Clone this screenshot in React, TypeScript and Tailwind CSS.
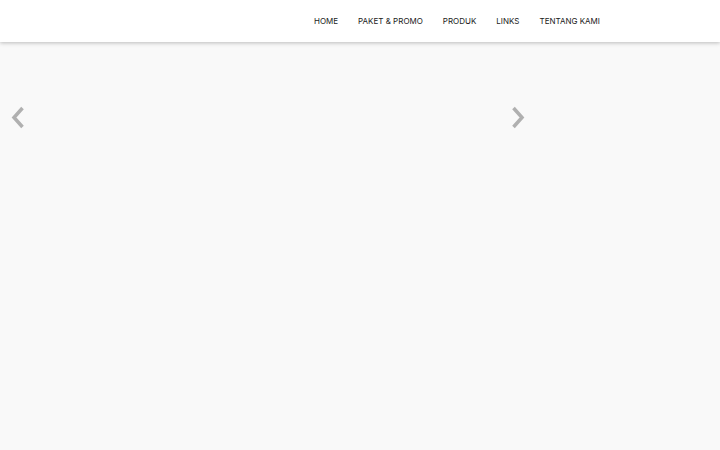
import React from "react";

export default function App() {
  const items = ["HOME", "PAKET & PROMO", "PRODUK", "LINKS", "TENTANG KAMI"];
  return (
    <div className="w-[720px] h-[450px] bg-[#f9f9f9] overflow-hidden" style={{ fontFamily: "Inter, 'Noto Sans', sans-serif" }}>
      <header className="h-[42px] bg-white shadow-[0_1px_4px_rgba(0,0,0,0.25)] flex items-center justify-end pr-[120px] relative z-10">
        <nav className="flex items-center gap-[20px] text-[8px] text-[#1a1a1a] pb-px">
          {items.map((t) => (
            <span key={t}>{t}</span>
          ))}
        </nav>
      </header>
      <div className="relative h-[408px]">
        <svg className="absolute left-[10px] top-[64px]" width="15" height="23" viewBox="0 0 15 23">
          <path d="M12.5 2 L4 11.5 L12.5 21" fill="none" stroke="#b0b0b0" strokeWidth="3.5" strokeLinecap="butt" strokeLinejoin="miter" />
        </svg>
        <svg className="absolute left-[511px] top-[64px]" width="15" height="23" viewBox="0 0 15 23">
          <path d="M2.5 2 L11 11.5 L2.5 21" fill="none" stroke="#b0b0b0" strokeWidth="3.5" strokeLinecap="butt" strokeLinejoin="miter" />
        </svg>
      </div>
    </div>
  );
}
